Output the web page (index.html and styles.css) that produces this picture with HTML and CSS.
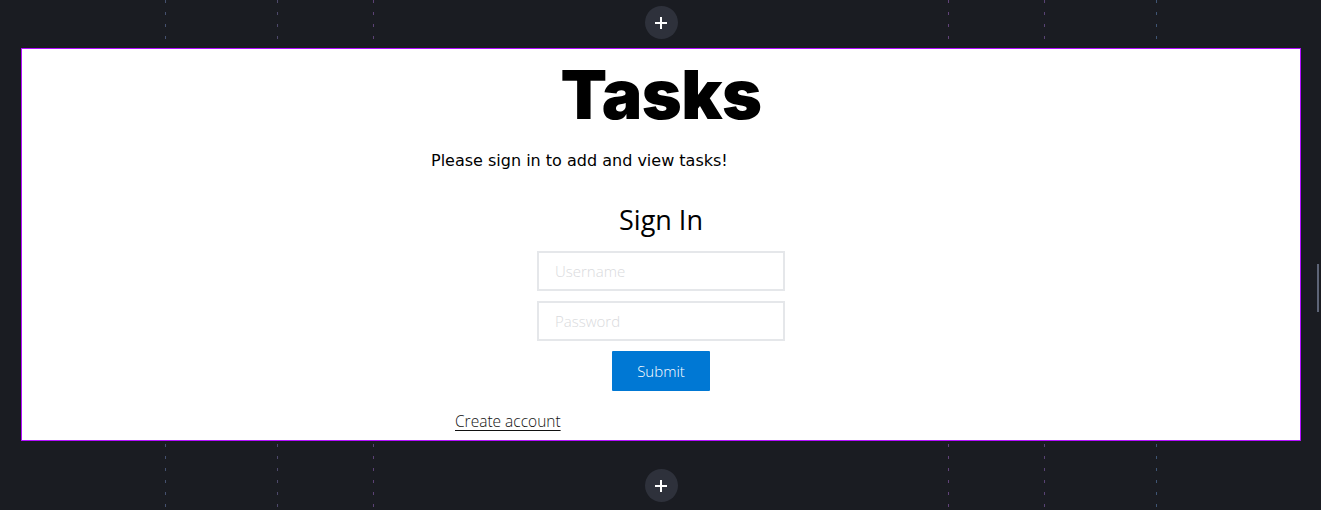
FILE: index.html
```html
<!DOCTYPE html>
<html lang="en">
<head>
<meta charset="utf-8">
<title>Tasks</title>
<link rel="stylesheet" href="styles.css">
</head>
<body>
<div class="canvas">
  <div class="guides" aria-hidden="true">
    <span class="guide g1"></span>
    <span class="guide g2"></span>
    <span class="guide g3"></span>
    <span class="guide g4"></span>
    <span class="guide g5"></span>
    <span class="guide g6"></span>
  </div>

  <div class="strip strip-top">
    <button class="add-btn" aria-label="Add section">
      <svg width="14" height="14" viewBox="0 0 14 14"><path d="M7 1v12M1 7h12" stroke="#fff" stroke-width="2" fill="none"/></svg>
    </button>
  </div>

  <section class="frame">
    <h1 class="title">Tasks</h1>
    <div class="intro">
      <p>Please sign in to add and view tasks!</p>
    </div>
    <form class="signin">
      <h2>Sign In</h2>
      <input class="field" type="text" placeholder="Username">
      <input class="field" type="password" placeholder="Password">
      <button class="submit" type="button">Submit</button>
    </form>
    <div class="links">
      <a href="#" class="create">Create account</a>
    </div>
  </section>

  <div class="strip strip-bottom">
    <button class="add-btn" aria-label="Add section">
      <svg width="14" height="14" viewBox="0 0 14 14"><path d="M7 1v12M1 7h12" stroke="#fff" stroke-width="2" fill="none"/></svg>
    </button>
  </div>

  <div class="scroll-thumb"></div>
</div>
</body>
</html>
```

FILE: styles.css
```css
html, body {
  margin: 0;
  padding: 0;
  background: #1a1c22;
}

.canvas {
  position: relative;
  width: 1321px;
  height: 510px;
  overflow: hidden;
  display: flex;
  flex-direction: column;
}

.guides {
  position: absolute;
  inset: 0;
  z-index: 0;
}

.guide {
  position: absolute;
  top: 0;
  bottom: 0;
  width: 1px;
  background: repeating-linear-gradient(to bottom, var(--c) 0 3px, transparent 3px 12px);
}
.g1 { left: 165px; --c: #45516f; }
.g2 { left: 277px; --c: #4e496b; }
.g3 { left: 373px; --c: #5c4276; }
.g4 { left: 948px; --c: #61437a; }
.g5 { left: 1044px; --c: #594375; }
.g6 { left: 1156px; --c: #3f5574; }

.strip {
  position: relative;
  z-index: 1;
  flex-shrink: 0;
  display: flex;
  justify-content: center;
  box-sizing: border-box;
}
.strip-top { height: 48px; padding-top: 6px; }
.strip-bottom { height: 69px; padding-top: 28px; }

.add-btn {
  width: 33px;
  height: 33px;
  border-radius: 50%;
  border: 0;
  padding: 0;
  background: #2e313b;
  display: flex;
  align-items: center;
  justify-content: center;
  margin-left: 1px;
}

.frame {
  position: relative;
  z-index: 1;
  flex-shrink: 0;
  margin: 0 20px 0 21px;
  height: 393px;
  box-sizing: border-box;
  border: 1.5px solid #b30fff;
  background: #fff;
  display: flex;
  flex-direction: column;
  align-items: center;
}

.title {
  margin: 4px 0 0;
  font-family: Inter, "Liberation Sans", sans-serif;
  font-weight: 900;
  font-size: 68px;
  line-height: 82px;
  letter-spacing: -0.5px;
  color: #000;
}

.intro {
  width: 460px;
}
.intro p {
  margin: 16px 0 0;
  font-family: "DejaVu Sans", sans-serif;
  font-size: 16px;
  line-height: 20px;
  color: #000;
}

.signin {
  display: flex;
  flex-direction: column;
  align-items: center;
  gap: 10px;
  margin-top: 32px;
}
.signin h2 {
  margin: 0 0 4px;
  font-family: "Open Sans", sans-serif;
  font-weight: 400;
  font-size: 27px;
  line-height: 34px;
  color: #000;
}

.field {
  width: 248px;
  height: 40px;
  box-sizing: border-box;
  border: 2px solid #e5e7ea;
  border-radius: 0;
  padding: 0 16px;
  font-family: "Open Sans", sans-serif;
  font-weight: 300;
  font-size: 15px;
  outline: none;
}
.field::placeholder { color: #d9dadd; }

.submit {
  width: 98px;
  height: 40px;
  border: 0;
  border-radius: 1px;
  background: #0078d4;
  color: #fff;
  font-family: "Open Sans", sans-serif;
  font-weight: 300;
  font-size: 15px;
}

.links {
  width: 412px;
  margin-top: 20px;
}
.create {
  font-family: "Open Sans", sans-serif;
  font-weight: 300;
  font-size: 15.5px;
  line-height: 20px;
  color: #111;
  text-decoration: underline;
  text-underline-offset: 3px;
}

.scroll-thumb {
  position: absolute;
  z-index: 2;
  left: 1317px;
  top: 264px;
  width: 2px;
  height: 48px;
  background: #5d6477;
}
```
